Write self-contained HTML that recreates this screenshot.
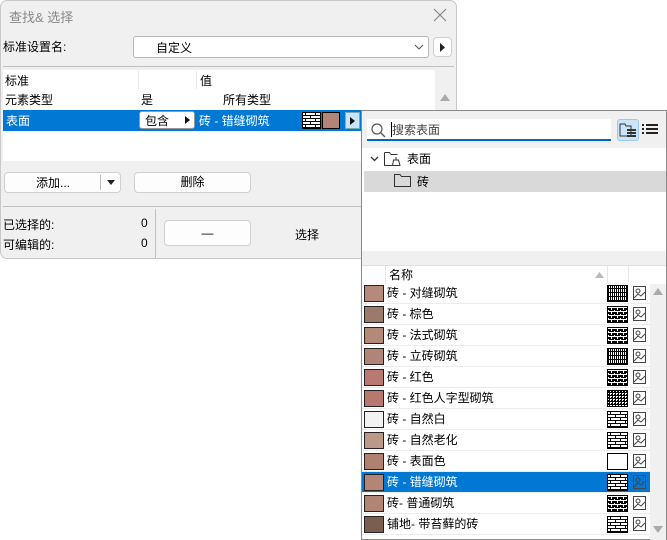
<!DOCTYPE html>
<html><head><meta charset="utf-8"><style>
*{margin:0;padding:0;box-sizing:border-box}
body{width:667px;height:540px;background:#fff;font-family:"Liberation Sans","Noto Sans CJK SC",sans-serif;font-size:12px;color:#000;position:relative;overflow:hidden}
.a{position:absolute;white-space:nowrap}
.dlg{left:0;top:0;width:457px;height:259px;background:#f0f0f0;border:1px solid #c8c8c8;border-radius:7px}
.btn{background:#fdfdfd;border:1px solid #d0d0d0;border-radius:4px;text-align:center;line-height:19px}
.pop{left:361px;top:110px;width:306px;height:430px;background:#fff;border:1px solid #8a8a8a}
.row{position:absolute;left:0;width:288px;height:21px;border-bottom:1px solid #ececec}
.sw{position:absolute;left:2px;top:2px;width:20px;height:17px;border:1px solid #222}
.rt{position:absolute;left:25px;top:1px}
.pt{position:absolute;left:245px;top:2px}
.im{position:absolute;left:271px;top:3px}
</style></head><body>
<svg width="0" height="0" style="position:absolute">
<defs>
<pattern id="p1" width="3" height="3" patternUnits="userSpaceOnUse"><rect width="3" height="3" fill="#000"/><rect x="0" y="0" width="2" height="1" fill="#fff"/><rect x="0" y="1" width="1" height="1" fill="#fff"/></pattern>
<pattern id="p2" width="6" height="4" patternUnits="userSpaceOnUse"><rect width="6" height="4" fill="#000"/><rect x="0" y="1" width="6" height="1" fill="#fff"/><rect x="1" y="0" width="1" height="1" fill="#fff"/><rect x="4" y="2" width="1" height="2" fill="#fff"/></pattern>
<pattern id="p3" width="10" height="6" patternUnits="userSpaceOnUse"><rect width="10" height="6" fill="#fff"/><rect x="0" y="0" width="10" height="1" fill="#000"/><rect x="0" y="3" width="10" height="1" fill="#000"/><rect x="3" y="0" width="1" height="3" fill="#000"/><rect x="8" y="3" width="1" height="3" fill="#000"/></pattern>
<pattern id="p4" width="2" height="4" patternUnits="userSpaceOnUse"><rect width="2" height="4" fill="#000"/><rect x="0" y="0" width="1" height="3" fill="#fff"/></pattern>
</defs></svg>

<div class="a dlg"></div>
<div class="a" style="left:9px;top:7px;color:#888;font-size:13px">查找&amp; 选择</div>
<svg class="a" style="left:433px;top:8px" width="14" height="14"><path d="M1 1L13 13M13 1L1 13" stroke="#888" stroke-width="1.2"/></svg>
<div class="a" style="left:3px;top:38px">标准设置名:</div>
<div class="a" style="left:133px;top:36px;width:296px;height:22px;background:#fff;border:1px solid #b8b8b8;border-radius:3px"></div>
<div class="a" style="left:156px;top:39px">自定义</div>
<svg class="a" style="left:414px;top:44px" width="10" height="6"><path d="M1 1L5 5L9 1" stroke="#555" fill="none"/></svg>
<div class="a btn" style="left:433px;top:37px;width:19px;height:20px"></div>
<svg class="a" style="left:440px;top:43px" width="6" height="9"><path d="M0 0L5 4.5L0 9Z" fill="#222"/></svg>
<div class="a" style="left:3px;top:66px;width:451px;height:1px;background:#c0c0c0"></div>
<div class="a" style="left:3px;top:70px;width:432px;height:91px;background:#fff"></div>
<div class="a" style="left:138px;top:71px;width:1px;height:18px;background:#e6e6e6"></div>
<div class="a" style="left:196px;top:71px;width:1px;height:18px;background:#e6e6e6"></div>
<div class="a" style="left:5px;top:72px">标准</div>
<div class="a" style="left:200px;top:72px">值</div>
<div class="a" style="left:5px;top:91px">元素类型</div>
<div class="a" style="left:141px;top:91px">是</div>
<div class="a" style="left:223px;top:91px">所有类型</div>
<svg class="a" style="left:440px;top:94px" width="10" height="7"><path d="M0 7L5 0L10 7Z" fill="#aaa"/></svg>
<div class="a" style="left:3px;top:110px;width:432px;height:21px;background:#0078d4"></div>
<div class="a" style="left:6px;top:112px;color:#fff">表面</div>
<div class="a" style="left:139px;top:111px;width:56px;height:18px;background:#fff;border:1px solid #999;border-radius:3px"></div>
<div class="a" style="left:145px;top:112px">包含</div>
<svg class="a" style="left:185px;top:116px" width="5" height="8"><path d="M0 0L5 4L0 8Z" fill="#111"/></svg>
<div class="a" style="left:199px;top:112px;color:#fff">砖 - 错缝砌筑</div>
<svg class="a" style="left:302px;top:112px" width="19" height="17"><rect width="19" height="17" fill="url(#p3)"/><rect x=".5" y=".5" width="18" height="16" fill="none" stroke="#000"/></svg>
<div class="a" style="left:322px;top:112px;width:18px;height:17px;background:#b38575;border:1px solid #000"></div>
<div class="a" style="left:345px;top:112px;width:15px;height:17px;background:#cce4f7;border:1px solid #7ab"></div>
<svg class="a" style="left:350px;top:117px" width="5" height="8"><path d="M0 0L5 4L0 8Z" fill="#111"/></svg>
<div class="a btn" style="left:4px;top:172px;width:117px;height:21px"></div>
<div class="a" style="left:36px;top:174px">添加...</div>
<div class="a" style="left:100px;top:175px;width:1px;height:15px;background:#bbb"></div>
<svg class="a" style="left:107px;top:180px" width="8" height="5"><path d="M0 0L8 0L4 5Z" fill="#222"/></svg>
<div class="a btn" style="left:134px;top:172px;width:117px;height:21px">删除</div>
<div class="a" style="left:3px;top:206px;width:358px;height:1px;background:#c0c0c0"></div>
<div class="a" style="left:155px;top:209px;width:1px;height:49px;background:#c0c0c0"></div>
<div class="a" style="left:3px;top:216px">已选择的:</div>
<div class="a" style="left:3px;top:236px">可编辑的:</div>
<div class="a" style="left:141px;top:216px">0</div>
<div class="a" style="left:141px;top:236px">0</div>
<div class="a btn" style="left:164px;top:220px;width:87px;height:26px;line-height:24px">—</div>
<div class="a" style="left:295px;top:226px">选择</div>

<div class="a pop">
 <div class="a" style="left:0;top:0;width:304px;height:37px;background:#f0f0f0"></div>
 <div class="a" style="left:5px;top:8px;width:244px;height:22px;background:#fff;border-bottom:2px solid #0067c0"></div>
 <svg class="a" style="left:9px;top:12px" width="15" height="15"><circle cx="6" cy="6" r="5" stroke="#555" fill="none" stroke-width="1.2"/><path d="M10 10L14 14" stroke="#555" stroke-width="1.4"/></svg>
 <div class="a" style="left:29px;top:11px;width:1px;height:15px;background:#000"></div>
 <div class="a" style="left:30px;top:10px;color:#444">搜索表面</div>
 <div class="a" style="left:255px;top:8px;width:22px;height:22px;background:#cce4f7;border:1px solid #99c9ef;border-radius:3px"></div>
 <svg class="a" style="left:257px;top:11px" width="18" height="16"><path d="M1 2H6L7 4H12V14H1Z" stroke="#333" fill="none"/><rect x="8" y="7" width="9" height="2" fill="#333"/><rect x="8" y="10" width="9" height="2" fill="#333"/><rect x="8" y="13" width="9" height="2" fill="#333"/></svg>
 <svg class="a" style="left:280px;top:12px" width="16" height="12"><g fill="#222"><rect x="0" y="1" width="2" height="2"/><rect x="4" y="1" width="12" height="2"/><rect x="0" y="5" width="2" height="2"/><rect x="4" y="5" width="12" height="2"/><rect x="0" y="9" width="2" height="2"/><rect x="4" y="9" width="12" height="2"/></g></svg>
 <svg class="a" style="left:8px;top:45px" width="9" height="6"><path d="M1 1L4.5 4.5L8 1" stroke="#333" fill="none" stroke-width="1.3"/></svg>
 <svg class="a" style="left:22px;top:40px" width="20" height="15"><path d="M.5 1.5H5.5L7 3.5H13.5M.5 1.5V14.5H9" stroke="#333" fill="none"/><path d="M12 6V9M9.5 9H14.5L16 14.5H8.5Z" stroke="#333" fill="none"/></svg>
 <div class="a" style="left:45px;top:39px">表面</div>
 <div class="a" style="left:2px;top:60px;width:302px;height:21px;background:#d9d9d9"></div>
 <svg class="a" style="left:32px;top:62px" width="18" height="15"><path d="M.5 1.5H6L7.5 3.5H16.5V13.5H.5Z" stroke="#333" fill="none"/></svg>
 <div class="a" style="left:55px;top:62px">砖</div>
 <div class="a" style="left:0;top:140px;width:304px;height:15px;background:#f0f0f0"></div>
 <div class="a" style="left:0;top:154px;width:304px;height:1px;background:#e0e0e0"></div>
 <div class="a" style="left:23px;top:155px;width:1px;height:17px;background:#e6e6e6"></div>
 <div class="a" style="left:245px;top:155px;width:1px;height:17px;background:#e6e6e6"></div>
 <div class="a" style="left:266px;top:155px;width:1px;height:17px;background:#e6e6e6"></div>
 <div class="a" style="left:27px;top:155px">名称</div>
 <svg class="a" style="left:233px;top:161px" width="9" height="6"><path d="M0 6L4.5 0L9 6Z" fill="#bbb"/></svg>
 <div class="a" style="left:288px;top:173px;width:16px;height:256px;background:#f0f0f0"></div>
 <svg class="a" style="left:291px;top:177px" width="10" height="7"><path d="M0 7L5 0L10 7Z" fill="#aaa"/></svg>
 <svg class="a" style="left:291px;top:415px" width="10" height="7"><path d="M0 0L5 7L10 0Z" fill="#aaa"/></svg>
 <div id="rows"></div>
</div>
<script>
var d=[["砖 - 对缝砌筑","#b58a7a","p4"],["砖 - 棕色","#9b7a6b","p2"],["砖 - 法式砌筑","#b5897a","p2"],["砖 - 立砖砌筑","#b08476","p4"],["砖 - 红色","#b87a70","p2"],["砖 - 红色人字型砌筑","#b87870","p1"],["砖 - 自然白","#f2f2f2","p3"],["砖 - 自然老化","#bc9888","p3"],["砖 - 表面色","#b08070",""],["砖 - 错缝砌筑","#b38575","p3"],["砖- 普通砌筑","#b28474","p2"],["铺地- 带苔藓的砖","#7a5e4e","p3"]];
var h="";d.forEach(function(r,i){var sel=i==9;h+='<div class="row" style="top:'+(172+i*21)+'px;'+(sel?'background:#0078d4;':'')+'"><div class="sw" style="background:'+r[1]+'"></div><div class="rt" style="color:'+(sel?'#fff':'#000')+'">'+r[0]+'</div><svg class="pt" width="21" height="17"><rect width="21" height="17" fill="'+(r[2]?'url(#'+r[2]+')':'#fff')+'"/><rect x=".5" y=".5" width="20" height="16" fill="none" stroke="#000"/></svg><svg class="im" width="13" height="14"><rect x=".5" y=".5" width="12" height="13" fill="none" stroke="#444"/><circle cx="5" cy="5" r="2" fill="none" stroke="#444"/><path d="M1 12L5 8L8 10L12 6" fill="none" stroke="#444"/></svg></div>'});
document.getElementById("rows").innerHTML=h;
</script>
</body></html>
